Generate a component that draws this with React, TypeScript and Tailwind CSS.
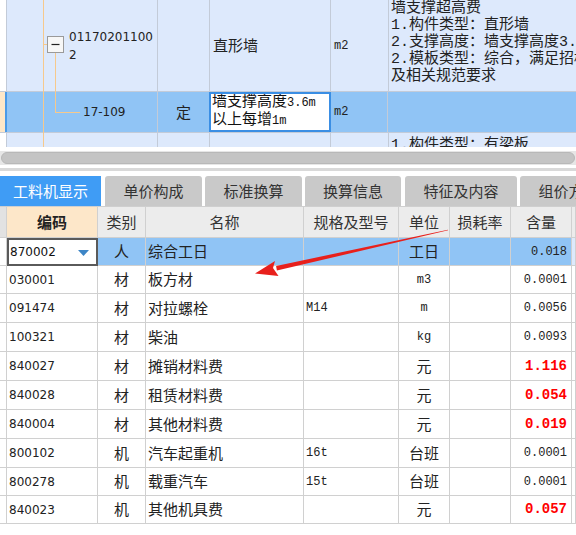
import React from "react";

type Row = {
  code: string;
  cat: string;
  name: string;
  spec?: string;
  unit: string;
  unitMono?: boolean;
  qty: string;
  red?: boolean;
  tall?: boolean;
};

const rows: Row[] = [
  { code: "030001", cat: "材", name: "板方材", unit: "m3", unitMono: true, qty: "0.0001" },
  { code: "091474", cat: "材", name: "对拉螺栓", spec: "M14", unit: "m", unitMono: true, qty: "0.0056", tall: true },
  { code: "100321", cat: "材", name: "柴油", unit: "kg", unitMono: true, qty: "0.0093", tall: true },
  { code: "840027", cat: "材", name: "摊销材料费", unit: "元", qty: "1.116", red: true, tall: true },
  { code: "840028", cat: "材", name: "租赁材料费", unit: "元", qty: "0.054", red: true, tall: true },
  { code: "840004", cat: "材", name: "其他材料费", unit: "元", qty: "0.019", red: true, tall: true },
  { code: "800102", cat: "机", name: "汽车起重机", spec: "16t", unit: "台班", qty: "0.0001", tall: true },
  { code: "800278", cat: "机", name: "载重汽车", spec: "15t", unit: "台班", qty: "0.0001" },
  { code: "840023", cat: "机", name: "其他机具费", unit: "元", qty: "0.057", red: true },
];

const cjk = "font-['Noto_Sans_CJK_SC',sans-serif]";
const mono = "font-['Liberation_Mono','Noto_Sans_CJK_SC',monospace]";
const sans = "font-['DejaVu_Sans','Noto_Sans_CJK_SC',sans-serif]";

const cell = "border-r border-b border-[#d0d0d0] flex items-center overflow-hidden whitespace-nowrap";

function Tabs() {
  const tabs = [
    { t: "单价构成", w: "w-[97px]" },
    { t: "标准换算", w: "w-[97px]" },
    { t: "换算信息", w: "w-[96px]" },
    { t: "特征及内容", w: "w-[112px]" },
    { t: "组价方案", w: "w-[97px]" },
  ];
  return (
    <div className={`flex h-[30px] items-stretch bg-white overflow-hidden ${cjk} text-[15px]`}>
      <div className="w-[101px] shrink-0 bg-[#3f9cf5] text-white flex items-center justify-center">
        工料机显示
      </div>
      {tabs.map((tb, i) => (
        <div
          key={tb.t}
          className={`${tb.w} shrink-0 ${i === 0 || i === 3 ? "ml-[4px]" : "ml-[3px]"} bg-[#c9c9c9] rounded-t-[3px] text-[#333] flex items-center justify-center`}
        >
          {tb.t}
        </div>
      ))}
    </div>
  );
}

function TopTree() {
  const vline = "border-r border-[#c3cbd8]";
  return (
    <div className="relative h-[147px] bg-[#dde9fc] overflow-hidden">
      {/* row 1 */}
      <div className="flex h-[92px] border-b border-[#c3cbd8]">
        <div className={`w-[7px] shrink-0 bg-white ${vline}`} />
        <div className={`w-[151px] shrink-0 ${vline} flex items-center pl-[62px] ${sans} text-[12px] leading-[18px] text-[#222]`}>
          <div>
            01170201100
            <br />2
          </div>
        </div>
        <div className={`w-[52px] shrink-0 ${vline}`} />
        <div className={`w-[121px] shrink-0 ${vline} flex items-center pl-[3px] ${cjk} text-[15px] text-[#222]`}>直形墙</div>
        <div className={`w-[58px] shrink-0 ${vline} flex items-center pl-[3px] ${mono} text-[12px] text-[#222]`}>m2</div>
        <div className={`flex-1 min-w-0 pl-[2px] ${mono} text-[15px] leading-[17px] text-[#222] whitespace-nowrap overflow-hidden`}>
          <div>墙支撑超高费</div>
          <div>1.构件类型：直形墙</div>
          <div>2.支撑高度：墙支撑高度3.6m以上</div>
          <div>2.模板类型：综合，满足招标文件</div>
          <div>及相关规范要求</div>
        </div>
      </div>
      {/* row 2 selected */}
      <div className="flex h-[41px] border-b border-[#c3cbd8] bg-[#90c4f5]">
        <div className="w-[7px] shrink-0 bg-[#fde7c8] border-r-2 border-[#4a9ae8]" />
        <div className={`w-[151px] shrink-0 ${vline} flex items-center pl-[76px] ${sans} text-[12px] text-[#222]`}>17-109</div>
        <div className={`w-[52px] shrink-0 ${vline} flex items-center justify-center ${cjk} text-[15px] text-[#222]`}>定</div>
        <div className={`w-[122px] shrink-0 -ml-[1px] bg-white border-2 border-[#3a8ee4] pl-[1px] ${mono} text-[15px] leading-[18px] text-[#111] whitespace-nowrap overflow-hidden`}>
          <div>墙支撑高度<span className="text-[12px]">3.6m</span></div>
          <div>以上每增<span className="text-[12px]">1m</span></div>
        </div>
        <div className={`w-[57px] shrink-0 ${vline} flex items-center pl-[3px] ${mono} text-[12px] text-[#222]`}>m2</div>
        <div className="flex-1" />
      </div>
      {/* row 3 */}
      <div className="flex h-[20px]">
        <div className={`w-[7px] shrink-0 bg-white ${vline}`} />
        <div className={`w-[151px] shrink-0 ${vline}`} />
        <div className={`w-[52px] shrink-0 ${vline}`} />
        <div className={`w-[121px] shrink-0 ${vline}`} />
        <div className={`w-[58px] shrink-0 ${vline}`} />
        <div className={`flex-1 pl-[2px] pt-[4px] ${mono} text-[15px] leading-[17px] text-[#222] whitespace-nowrap`}>1.构件类型：有梁板</div>
      </div>
      {/* tree lines drawing */}
      <svg className="absolute left-0 top-0" width="120" height="147" viewBox="0 0 120 147">
        <line x1="43.5" y1="0" x2="43.5" y2="147" stroke="#f6c98c" strokeWidth="1" />
        <line x1="43" y1="44.5" x2="47" y2="44.5" stroke="#f6c98c" strokeWidth="1" />
        <line x1="55.5" y1="52" x2="55.5" y2="112.5" stroke="#f6c98c" strokeWidth="1" />
        <line x1="55" y1="112.5" x2="80" y2="112.5" stroke="#f6c98c" strokeWidth="1" />
        <rect x="47.5" y="36.5" width="16" height="16" fill="#f7f7f7" stroke="#9a9a9a" strokeWidth="1" />
        <line x1="51.5" y1="44.5" x2="59.5" y2="44.5" stroke="#222" strokeWidth="1.2" />
      </svg>
    </div>
  );
}

function Grid() {
  const cols = "grid grid-cols-[7px_91px_48px_158px_95px_51px_61px_61px_1fr]";
  const head = `${cell} justify-center bg-[#ececec] ${cjk} text-[15px] text-[#333]`;
  return (
    <div className="border-t border-[#cfcfcf]">
      {/* header */}
      <div className={`${cols} h-[31px]`}>
        <div className={`${cell} bg-[#e2e2e2]`} />
        <div className={`${cell} justify-center bg-[#fde7c9] ${cjk} text-[15px] font-bold text-[#222]`}>编码</div>
        <div className={head}>类别</div>
        <div className={head}>名称</div>
        <div className={head}>规格及型号</div>
        <div className={head}>单位</div>
        <div className={head}>损耗率</div>
        <div className={head}>含量</div>
        <div className={`${cell} bg-[#ececec]`} />
      </div>
      {/* selected row */}
      <div className={`${cols} h-[28px] bg-[#90c4f5]`}>
        <div className={`${cell} bg-white`} />
        <div className="relative bg-white border-2 border-[#5a5a5a] flex items-center pl-[1px] overflow-hidden">
          <span className={`${sans} text-[12px] text-[#111]`}>870002</span>
          <svg className="absolute right-[7px] top-[10px]" width="11" height="7" viewBox="0 0 11 7">
            <polygon points="0,0 11,0 5.5,6" fill="#3d85c6" />
          </svg>
        </div>
        <div className={`${cell} justify-center ${cjk} text-[15px] text-[#222]`}>人</div>
        <div className={`${cell} pl-[2px] ${cjk} text-[15px] text-[#222]`}>综合工日</div>
        <div className={cell} />
        <div className={`${cell} justify-center ${cjk} text-[15px] text-[#222]`}>工日</div>
        <div className={cell} />
        <div className={`${cell} justify-end pr-[4px] ${mono} text-[12px] text-[#222]`}>0.018</div>
        <div className={`${cell} bg-[#dde9fc]`} />
      </div>
      {rows.map((r) => (
        <div key={r.code} className={`${cols} ${r.tall ? "h-[29px]" : "h-[28px]"} bg-white`}>
          <div className={cell} />
          <div className={`${cell} pl-[2px] ${sans} text-[12px] text-[#222]`}>{r.code}</div>
          <div className={`${cell} justify-center ${cjk} text-[15px] text-[#222]`}>{r.cat}</div>
          <div className={`${cell} pl-[2px] ${cjk} text-[15px] text-[#222]`}>{r.name}</div>
          <div className={`${cell} pl-[2px] ${mono} text-[12px] text-[#222]`}>{r.spec ?? ""}</div>
          <div className={`${cell} justify-center ${r.unitMono ? `${mono} text-[12px]` : `${cjk} text-[15px]`} text-[#222]`}>{r.unit}</div>
          <div className={cell} />
          <div
            className={`${cell} justify-end pr-[4px] ${mono} ${r.red ? "text-[14px] font-bold text-[#ff0000]" : "text-[12px] text-[#222]"}`}
          >
            {r.qty}
          </div>
          <div className={cell} />
        </div>
      ))}
    </div>
  );
}

export default function App() {
  return (
    <div className="relative w-[576px] h-[535px] overflow-hidden bg-white">
      <TopTree />
      <div className="h-[4px] bg-white" />
      <div className="h-[14px] bg-[#e6e6e6] px-[1px] py-[1px]">
        <div className="h-full rounded-[6px] bg-[#c4c4c4] border border-[#b8b8b8]" />
      </div>
      <div className="h-[3px] bg-white" />
      <div className="h-[3px] bg-[#d9d9d9]" />
      <div className="h-[5px] bg-white" />
      <Tabs />
      <Grid />
      {/* red annotation arrow */}
      <svg className="absolute left-0 top-0 pointer-events-none" width="576" height="535" viewBox="0 0 576 535">
        <polygon points="448,229.7 448.1,230.3 276.9,270.6 276.1,266.0" fill="#e8201c" />
        <polygon points="255,273.5 275,261 273,268 278.5,276" fill="#e8201c" />
      </svg>
    </div>
  );
}
